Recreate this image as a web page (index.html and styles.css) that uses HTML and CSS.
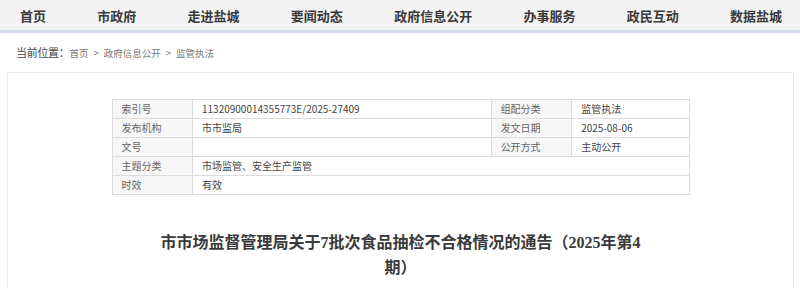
FILE: index.html
```html
<!DOCTYPE html>
<html lang="zh-CN">
<head>
<meta charset="UTF-8">
<meta name="viewport" content="width=device-width, initial-scale=1.0">
<title>市市场监督管理局关于7批次食品抽检不合格情况的通告</title>
<link rel="stylesheet" href="styles.css">
</head>
<body>
  <div class="nav">
    <a href="#">首页</a>
    <a href="#">市政府</a>
    <a href="#">走进盐城</a>
    <a href="#">要闻动态</a>
    <a href="#">政府信息公开</a>
    <a href="#">办事服务</a>
    <a href="#">政民互动</a>
    <a href="#">数据盐城</a>
  </div>

  <div class="crumb">
    <span class="crumb-label">当前位置：</span><a href="#">首页</a><span class="sep">&gt;</span><a href="#">政府信息公开</a><span class="sep">&gt;</span><a href="#">监管执法</a>
  </div>

  <div class="content">
    <table class="meta">
      <tr>
        <td class="label">索引号</td>
        <td class="value">11320900014355773E/2025-27409</td>
        <td class="label">组配分类</td>
        <td class="value">监管执法</td>
      </tr>
      <tr>
        <td class="label">发布机构</td>
        <td class="value">市市监局</td>
        <td class="label">发文日期</td>
        <td class="value">2025-08-06</td>
      </tr>
      <tr>
        <td class="label">文号</td>
        <td class="value"></td>
        <td class="label">公开方式</td>
        <td class="value">主动公开</td>
      </tr>
      <tr>
        <td class="label">主题分类</td>
        <td class="value" colspan="3">市场监管、安全生产监管</td>
      </tr>
      <tr>
        <td class="label">时效</td>
        <td class="value" colspan="3">有效</td>
      </tr>
    </table>

    <h1 class="title">市市场监督管理局关于7批次食品抽检不合格情况的通告（2025年第4期）</h1>
  </div>
</body>
</html>
```

FILE: styles.css
```css
body {
  margin: 0;
  font-family: "Noto Sans CJK SC", sans-serif;
  color: #333;
  background: #fff;
}
a {
  color: inherit;
  text-decoration: none;
}
/* top menu */
.nav {
  height: 30px;
  background: #f3f3f3;
  border-bottom: 3px solid #d3dceb;
  display: flex;
  justify-content: space-between;
  align-items: center;
  padding: 0 18px 0 20px;
}
.nav a {
  font-size: 13px;
  font-weight: bold;
  color: #3a3a3a;
}
/* location */
.crumb {
  height: 39px;
  line-height: 39px;
  padding-left: 16px;
  font-size: 9.5px;
  color: #777;
}
.crumb-label {
  font-size: 11px;
  color: #444;
  letter-spacing: -0.3px;
}
.crumb .sep {
  margin: 0 5px;
}
.content {
  margin: 0 6px 0 7px;
  border: 1px solid #e8e8e8;
  border-bottom: none;
  padding-top: 26px;
  height: 190px;
}
/* info table */
.meta {
  width: 578px;
  margin: 0 auto;
  border-collapse: collapse;
  font-size: 10px;
}
.meta td {
  border: 1px solid #dcdcdc;
  height: 18px;
  padding: 0 9px;
  line-height: 18px;
}
.meta .label {
  background: #f7f7f7;
  color: #666;
  width: 62px;
}
.meta .value {
  color: #444;
}
.meta tr td:nth-child(2) {
  width: 281px;
}
.meta tr td:nth-child(4) {
  width: 99px;
}
.title {
  width: 500px;
  margin: 35px auto 0;
  text-align: center;
  font-family: "Liberation Serif", "Noto Sans CJK SC", serif;
  font-size: 16px;
  font-weight: bold;
  line-height: 25px;
  color: #3a3a3a;
}
```
